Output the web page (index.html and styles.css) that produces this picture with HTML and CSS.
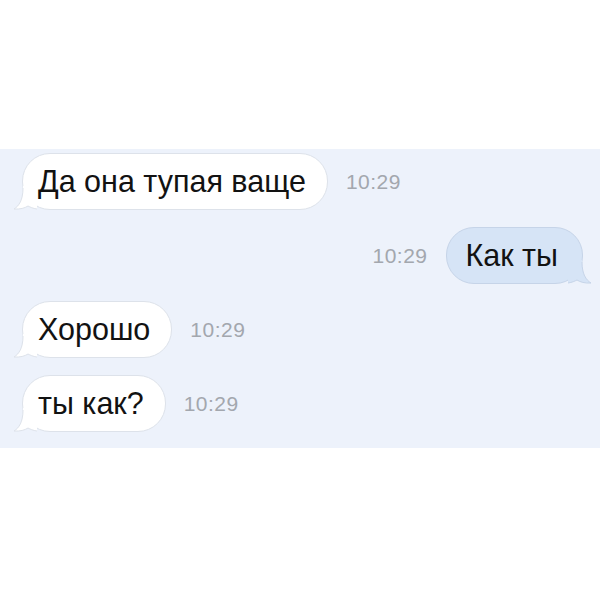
FILE: index.html
```html
<!DOCTYPE html>
<html lang="ru">
<head>
    <meta charset="UTF-8">
    <meta name="viewport" content="width=device-width, initial-scale=1.0">
    <title>Сообщения</title>
    <link rel="stylesheet" href="styles.css">
</head>
<body>
    <div class="chat">
        <div class="row in">
            <div class="bubble">
                Да она тупая ваще
                <svg class="tail" viewBox="0 0 24 24" width="24" height="24"><path class="fill" d="M10 0 L10 2 C10 14 6 20 1 23 C7 23.5 12 22 15 20 C17 21 20 22.5 24 23 L24 0 Z"/><path class="edge" d="M10 2 C10 14 6 20 1 23 C7 23.5 12 22 15 20 C17 21 20 22.5 24 23"/></svg>
            </div>
            <span class="time">10:29</span>
        </div>
        <div class="row out">
            <span class="time">10:29</span>
            <div class="bubble">
                Как ты
                <svg class="tail" viewBox="0 0 24 24" width="24" height="24"><path class="fill" d="M10 0 L10 2 C10 14 6 20 1 23 C7 23.5 12 22 15 20 C17 21 20 22.5 24 23 L24 0 Z"/><path class="edge" d="M10 2 C10 14 6 20 1 23 C7 23.5 12 22 15 20 C17 21 20 22.5 24 23"/></svg>
            </div>
        </div>
        <div class="row in">
            <div class="bubble">
                Хорошо
                <svg class="tail" viewBox="0 0 24 24" width="24" height="24"><path class="fill" d="M10 0 L10 2 C10 14 6 20 1 23 C7 23.5 12 22 15 20 C17 21 20 22.5 24 23 L24 0 Z"/><path class="edge" d="M10 2 C10 14 6 20 1 23 C7 23.5 12 22 15 20 C17 21 20 22.5 24 23"/></svg>
            </div>
            <span class="time">10:29</span>
        </div>
        <div class="row in">
            <div class="bubble">
                ты как?
                <svg class="tail" viewBox="0 0 24 24" width="24" height="24"><path class="fill" d="M10 0 L10 2 C10 14 6 20 1 23 C7 23.5 12 22 15 20 C17 21 20 22.5 24 23 L24 0 Z"/><path class="edge" d="M10 2 C10 14 6 20 1 23 C7 23.5 12 22 15 20 C17 21 20 22.5 24 23"/></svg>
            </div>
            <span class="time">10:29</span>
        </div>
    </div>
</body>
</html>
```
FILE: styles.css
```css
body {
    margin: 0;
    background-color: #fff;
    font-family: "Liberation Sans", Arial, sans-serif;
}
.chat {
    margin-top: 149px;
    height: 299px;
    box-sizing: border-box;
    padding: 4px 17px 0 22px;
    background-color: #edf2fb;
    display: flex;
    flex-direction: column;
    gap: 17px;
}
.row {
    display: flex;
    align-items: center;
    gap: 18px;
}
.row.out {
    justify-content: flex-end;
}
.bubble {
    position: relative;
    height: 57px;
    box-sizing: border-box;
    display: flex;
    align-items: center;
    padding: 0 21px 1px 15px;
    border-radius: 28px;
    background-color: #fff;
    border: 1px solid #dde2ea;
    color: #121212;
    font-size: 30.5px;
}
.out .bubble {
    padding: 0 24px 1px 19px;
    background-color: #d6e4f6;
    border-color: #c6d4e8;
}
.time {
    color: #a3a7ae;
    font-size: 21px;
    letter-spacing: 0.5px;
}
/* хвостик пузыря */
.tail {
    position: absolute;
    left: -10px;
    bottom: -1px;
}
.out .tail {
    left: auto;
    right: -10px;
    transform: scaleX(-1);
}
.tail .fill {
    fill: #fff;
}
.tail .edge {
    fill: none;
    stroke: #dde2ea;
    stroke-width: 1;
}
.out .tail .fill {
    fill: #d6e4f6;
}
.out .tail .edge {
    stroke: #c6d4e8;
}
```
